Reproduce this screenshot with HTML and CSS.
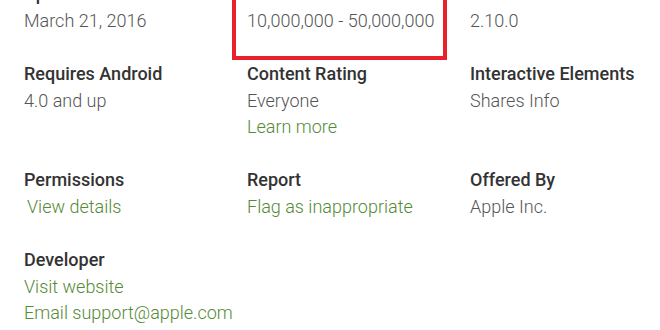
FILE: index.html
```html
<!DOCTYPE html>
<html lang="en">
<head>
    <meta charset="UTF-8">
    <meta name="viewport" content="width=device-width, initial-scale=1.0">
    <title>Additional information</title>
    <link rel="stylesheet" href="styles.css">
</head>
<body>
    <div class="details">
        <div class="meta">
            <div class="title">Updated</div>
            <div class="content">March 21, 2016</div>
        </div>
        <div class="meta marked">
            <div class="title">Installs</div>
            <div class="content">10,000,000 - 50,000,000</div>
            <span class="highlight"></span>
        </div>
        <div class="meta">
            <div class="title">Current Version</div>
            <div class="content">2.10.0</div>
        </div>

        <div class="meta">
            <div class="title">Requires Android</div>
            <div class="content">4.0 and up</div>
        </div>
        <div class="meta">
            <div class="title">Content Rating</div>
            <div class="content">Everyone</div>
            <a class="link" href="#">Learn more</a>
        </div>
        <div class="meta">
            <div class="title">Interactive Elements</div>
            <div class="content">Shares Info</div>
        </div>

        <div class="meta">
            <div class="title">Permissions</div>
            <a class="link indent" href="#">View details</a>
        </div>
        <div class="meta">
            <div class="title">Report</div>
            <a class="link" href="#">Flag as inappropriate</a>
        </div>
        <div class="meta">
            <div class="title">Offered By</div>
            <div class="content">Apple Inc.</div>
        </div>

        <div class="meta">
            <div class="title">Developer</div>
            <a class="link" href="#">Visit website</a>
            <a class="link" href="#">Email support@apple.com</a>
        </div>
    </div>
</body>
</html>
```

FILE: styles.css
```css
*{
    font-family: Roboto, "Liberation Sans", sans-serif;
    box-sizing: border-box;
}
body{
    margin: 0;
    background: #ffffff;
    overflow: hidden;
}
.details{
    display: grid;
    grid-template-columns: 223px 223px 190px;
    row-gap: 26px;
    margin-top: -20px;
    padding-left: 24px;
}
.meta{
    display: flex;
    flex-direction: column;
    align-items: flex-start;
}
.title{
    font-size: 18px;
    font-weight: 500;
    line-height: 28px;
    color: #333333;
    white-space: nowrap;
}
.content,
.link{
    font-size: 18px;
    font-weight: 300;
    line-height: 26px;
    color: #555555;
    white-space: nowrap;
}
.link{
    color: #558a36;
    text-decoration: none;
}
.indent{
    padding-left: 3px;
}
.marked{
    position: relative;
}
.highlight{
    position: absolute;
    left: -15px;
    top: -30px;
    width: 215px;
    height: 110px;
    border: 4px solid #e8202a;
}
```
